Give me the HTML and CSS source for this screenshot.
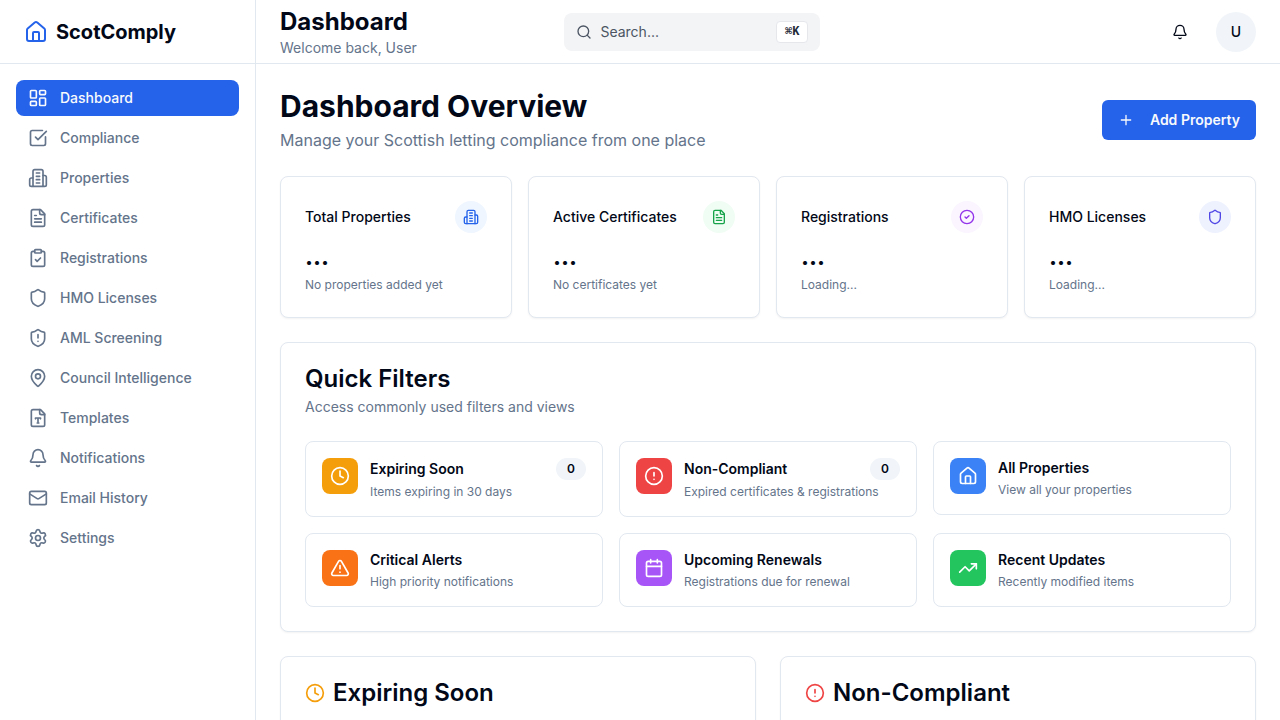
FILE: index.html
```html
<!DOCTYPE html>
<html lang="en">
<head>
<meta charset="utf-8">
<meta name="viewport" content="width=device-width, initial-scale=1">
<title>ScotComply</title>
<link rel="stylesheet" href="styles.css">
</head>
<body>
<svg class="sprite" aria-hidden="true">
  <symbol id="home" viewBox="0 0 24 24"><path d="M15 21v-8a1 1 0 0 0-1-1h-4a1 1 0 0 0-1 1v8"/><path d="M3 10a2 2 0 0 1 .709-1.528l7-5.999a2 2 0 0 1 2.582 0l7 5.999A2 2 0 0 1 21 10v9a2 2 0 0 1-2 2H5a2 2 0 0 1-2-2z"/></symbol>
  <symbol id="dashboard" viewBox="0 0 24 24"><rect width="7" height="9" x="3" y="3" rx="1"/><rect width="7" height="5" x="14" y="3" rx="1"/><rect width="7" height="9" x="14" y="12" rx="1"/><rect width="7" height="5" x="3" y="16" rx="1"/></symbol>
  <symbol id="check-square" viewBox="0 0 24 24"><path d="M21 10.656V19a2 2 0 0 1-2 2H5a2 2 0 0 1-2-2V5a2 2 0 0 1 2-2h12.344"/><path d="m9 11 3 3L22 4"/></symbol>
  <symbol id="building" viewBox="0 0 24 24"><path d="M6 22V4a2 2 0 0 1 2-2h8a2 2 0 0 1 2 2v18Z"/><path d="M6 12H4a2 2 0 0 0-2 2v6a2 2 0 0 0 2 2h2"/><path d="M18 9h2a2 2 0 0 1 2 2v9a2 2 0 0 1-2 2h-2"/><path d="M10 6h4M10 10h4M10 14h4M10 18h4"/></symbol>
  <symbol id="file-text" viewBox="0 0 24 24"><path d="M15 2H6a2 2 0 0 0-2 2v16a2 2 0 0 0 2 2h12a2 2 0 0 0 2-2V7Z"/><path d="M14 2v4a2 2 0 0 0 2 2h4"/><path d="M10 9H8M16 13H8M16 17H8"/></symbol>
  <symbol id="clipboard" viewBox="0 0 24 24"><rect width="8" height="4" x="8" y="2" rx="1"/><path d="M16 4h2a2 2 0 0 1 2 2v14a2 2 0 0 1-2 2H6a2 2 0 0 1-2-2V6a2 2 0 0 1 2-2h2"/><path d="m9 14 2 2 4-4"/></symbol>
  <symbol id="shield" viewBox="0 0 24 24"><path d="M20 13c0 5-3.5 7.5-7.66 8.95a1 1 0 0 1-.67-.01C7.5 20.5 4 18 4 13V6a1 1 0 0 1 1-1c2 0 4.500-1.200 6.240-2.720a1.170 1.170 0 0 1 1.520 0C14.510 3.810 17 5 19 5a1 1 0 0 1 1 1z"/></symbol>
  <symbol id="shield-alert" viewBox="0 0 24 24"><path d="M20 13c0 5-3.5 7.5-7.66 8.950a1 1 0 0 1-.67-.01C7.500 20.500 4 18 4 13V6a1 1 0 0 1 1-1c2 0 4.500-1.200 6.240-2.720a1.170 1.170 0 0 1 1.520 0C14.510 3.810 17 5 19 5a1 1 0 0 1 1 1z"/><path d="M12 8v4M12 16h.01"/></symbol>
  <symbol id="pin" viewBox="0 0 24 24"><path d="M20 10c0 4.993-5.539 10.193-7.399 11.799a1 1 0 0 1-1.202 0C9.539 20.193 4 14.993 4 10a8 8 0 0 1 16 0"/><circle cx="12" cy="10" r="3"/></symbol>
  <symbol id="file-type" viewBox="0 0 24 24"><path d="M15 2H6a2 2 0 0 0-2 2v16a2 2 0 0 0 2 2h12a2 2 0 0 0 2-2V7Z"/><path d="M14 2v4a2 2 0 0 0 2 2h4"/><path d="M9 13v-1h6v1M12 12v6M11 18h2"/></symbol>
  <symbol id="bell" viewBox="0 0 24 24"><path d="M10.268 21a2 2 0 0 0 3.464 0"/><path d="M3.262 15.326A1 1 0 0 0 4 17h16a1 1 0 0 0 .740-1.673C19.410 13.956 18 12.499 18 8A6 6 0 0 0 6 8c0 4.499-1.411 5.956-2.738 7.326"/></symbol>
  <symbol id="mail" viewBox="0 0 24 24"><rect width="20" height="16" x="2" y="4" rx="2"/><path d="m22 7-8.970 5.700a1.940 1.940 0 0 1-2.060 0L2 7"/></symbol>
  <symbol id="settings" viewBox="0 0 24 24"><path d="M9.671 4.136a2.340 2.340 0 0 1 4.659 0 2.340 2.340 0 0 0 3.319 1.915 2.340 2.340 0 0 1 2.330 4.033 2.340 2.340 0 0 0 0 3.831 2.340 2.340 0 0 1-2.330 4.033 2.340 2.340 0 0 0-3.319 1.915 2.340 2.340 0 0 1-4.659 0 2.340 2.340 0 0 0-3.320-1.915 2.340 2.340 0 0 1-2.330-4.033 2.340 2.340 0 0 0 0-3.831A2.340 2.340 0 0 1 6.350 6.051a2.340 2.340 0 0 0 3.319-1.915"/><circle cx="12" cy="12" r="3"/></symbol>
  <symbol id="search" viewBox="0 0 24 24"><path d="m21 21-4.340-4.340"/><circle cx="11" cy="11" r="8"/></symbol>
  <symbol id="plus" viewBox="0 0 24 24"><path d="M5 12h14M12 5v14"/></symbol>
  <symbol id="circle-check" viewBox="0 0 24 24"><circle cx="12" cy="12" r="10"/><path d="m9 12 2 2 4-4"/></symbol>
  <symbol id="clock" viewBox="0 0 24 24"><circle cx="12" cy="12" r="10"/><path d="M12 6v6l4 2"/></symbol>
  <symbol id="circle-alert" viewBox="0 0 24 24"><circle cx="12" cy="12" r="10"/><path d="M12 8v4M12 16h.01"/></symbol>
  <symbol id="triangle" viewBox="0 0 24 24"><path d="m21.730 18-8-14a2 2 0 0 0-3.480 0l-8 14A2 2 0 0 0 4 21h16a2 2 0 0 0 1.730-3"/><path d="M12 9v4M12 17h.01"/></symbol>
  <symbol id="calendar" viewBox="0 0 24 24"><rect width="18" height="18" x="3" y="4" rx="2"/><path d="M8 2v4M16 2v4M3 10h18"/></symbol>
  <symbol id="trending" viewBox="0 0 24 24"><path d="M16 7h6v6"/><path d="m22 7-8.500 8.500-5-5L2 17"/></symbol>
</svg>

<div class="app">
  <aside class="sidebar">
    <a class="brand" href="#"><svg class="icon icon-lg"><use href="#home"/></svg><span>ScotComply</span></a>
    <nav class="nav" aria-label="Main">
      <a class="nav-link active" href="#" aria-current="page"><svg class="icon"><use href="#dashboard"/></svg>Dashboard</a>
      <a class="nav-link" href="#"><svg class="icon"><use href="#check-square"/></svg>Compliance</a>
      <a class="nav-link" href="#"><svg class="icon"><use href="#building"/></svg>Properties</a>
      <a class="nav-link" href="#"><svg class="icon"><use href="#file-text"/></svg>Certificates</a>
      <a class="nav-link" href="#"><svg class="icon"><use href="#clipboard"/></svg>Registrations</a>
      <a class="nav-link" href="#"><svg class="icon"><use href="#shield"/></svg>HMO Licenses</a>
      <a class="nav-link" href="#"><svg class="icon"><use href="#shield-alert"/></svg>AML Screening</a>
      <a class="nav-link" href="#"><svg class="icon"><use href="#pin"/></svg>Council Intelligence</a>
      <a class="nav-link" href="#"><svg class="icon"><use href="#file-type"/></svg>Templates</a>
      <a class="nav-link" href="#"><svg class="icon"><use href="#bell"/></svg>Notifications</a>
      <a class="nav-link" href="#"><svg class="icon"><use href="#mail"/></svg>Email History</a>
      <a class="nav-link" href="#"><svg class="icon"><use href="#settings"/></svg>Settings</a>
    </nav>
  </aside>

  <div class="page">
    <header class="topbar">
      <div>
        <h1 class="topbar-title">Dashboard</h1>
        <p class="topbar-sub">Welcome back, User</p>
      </div>
      <div class="search-area">
        <button class="search" type="button"><svg class="icon icon-sm"><use href="#search"/></svg><span>Search...</span><kbd class="kbd">⌘K</kbd></button>
      </div>
      <div class="actions">
        <button class="icon-button" type="button" aria-label="Notifications"><svg class="icon icon-sm"><use href="#bell"/></svg></button>
        <button class="icon-button avatar" type="button">U</button>
      </div>
    </header>

    <main class="main">
      <div class="page-head">
        <div>
          <h2 class="page-title">Dashboard Overview</h2>
          <p class="page-sub">Manage your Scottish letting compliance from one place</p>
        </div>
        <button class="add-button" type="button"><svg class="icon icon-sm"><use href="#plus"/></svg>Add Property</button>
      </div>

      <section class="stats">
        <article class="card">
          <div class="stat-head"><h3 class="stat-title">Total Properties</h3><span class="stat-icon blue"><svg class="icon icon-sm"><use href="#building"/></svg></span></div>
          <p class="stat-value">...</p><p class="note">No properties added yet</p>
        </article>
        <article class="card">
          <div class="stat-head"><h3 class="stat-title">Active Certificates</h3><span class="stat-icon green"><svg class="icon icon-sm"><use href="#file-text"/></svg></span></div>
          <p class="stat-value">...</p><p class="note">No certificates yet</p>
        </article>
        <article class="card">
          <div class="stat-head"><h3 class="stat-title">Registrations</h3><span class="stat-icon purple"><svg class="icon icon-sm"><use href="#circle-check"/></svg></span></div>
          <p class="stat-value">...</p><p class="note">Loading...</p>
        </article>
        <article class="card">
          <div class="stat-head"><h3 class="stat-title">HMO Licenses</h3><span class="stat-icon indigo"><svg class="icon icon-sm"><use href="#shield"/></svg></span></div>
          <p class="stat-value">...</p><p class="note">Loading...</p>
        </article>
      </section>

      <section class="card">
        <h3 class="card-title">Quick Filters</h3>
        <p class="card-desc">Access commonly used filters and views</p>
        <div class="filters">
          <a class="filter" href="#"><span class="tile amber"><svg class="icon"><use href="#clock"/></svg></span><div class="filter-body"><div class="filter-head"><h4 class="filter-title">Expiring Soon</h4><span class="badge">0</span></div><p class="note">Items expiring in 30 days</p></div></a>
          <a class="filter" href="#"><span class="tile red"><svg class="icon"><use href="#circle-alert"/></svg></span><div class="filter-body"><div class="filter-head"><h4 class="filter-title">Non-Compliant</h4><span class="badge">0</span></div><p class="note">Expired certificates &amp; registrations</p></div></a>
          <a class="filter" href="#"><span class="tile sky"><svg class="icon"><use href="#home"/></svg></span><div class="filter-body"><div class="filter-head"><h4 class="filter-title">All Properties</h4></div><p class="note">View all your properties</p></div></a>
          <a class="filter" href="#"><span class="tile orange"><svg class="icon"><use href="#triangle"/></svg></span><div class="filter-body"><div class="filter-head"><h4 class="filter-title">Critical Alerts</h4></div><p class="note">High priority notifications</p></div></a>
          <a class="filter" href="#"><span class="tile violet"><svg class="icon"><use href="#calendar"/></svg></span><div class="filter-body"><div class="filter-head"><h4 class="filter-title">Upcoming Renewals</h4></div><p class="note">Registrations due for renewal</p></div></a>
          <a class="filter" href="#"><span class="tile emerald"><svg class="icon"><use href="#trending"/></svg></span><div class="filter-body"><div class="filter-head"><h4 class="filter-title">Recent Updates</h4></div><p class="note">Recently modified items</p></div></a>
        </div>
      </section>

      <section class="lists">
        <article class="card"><h3 class="card-title"><svg class="icon amber-text"><use href="#clock"/></svg>Expiring Soon</h3></article>
        <article class="card"><h3 class="card-title"><svg class="icon red-text"><use href="#circle-alert"/></svg>Non-Compliant</h3></article>
      </section>
    </main>
  </div>
</div>
</body>
</html>
```

FILE: styles.css
```css
:root {
  --ink: #020817;
  --muted: #64748b;
  --line: #e2e8f0;
  --soft: #f1f5f9;
  --primary: #2563eb;
}

*, *::before, *::after { box-sizing: border-box; }

body {
  margin: 0;
  background: #fff;
  color: var(--ink);
  font: 400 14px/20px Inter, "Liberation Sans", sans-serif;
}

h1, h2, h3, h4, p { margin: 0; }
a { color: inherit; text-decoration: none; }

button {
  border: 0;
  background: none;
  color: inherit;
  font: inherit;
  cursor: pointer;
}

.sprite { display: none; }

.icon {
  flex: none;
  width: 20px;
  height: 20px;
  fill: none;
  stroke: currentColor;
  stroke-width: 2;
  stroke-linecap: round;
  stroke-linejoin: round;
}
.icon-sm { width: 16px; height: 16px; }
.icon-lg { width: 24px; height: 24px; }

/* Shell */
.app { display: flex; height: 100vh; overflow: hidden; }

.sidebar {
  flex: none;
  width: 256px;
  border-right: 1px solid var(--line);
}

.brand {
  display: flex;
  align-items: center;
  gap: 8px;
  height: 64px;
  padding: 0 24px;
  border-bottom: 1px solid var(--line);
  font-size: 20px;
  line-height: 28px;
  font-weight: 700;
}
.brand .icon { color: var(--primary); }

.nav { display: flex; flex-direction: column; gap: 4px; padding: 16px; }

.nav-link {
  display: flex;
  align-items: center;
  gap: 12px;
  padding: 8px 12px;
  border-radius: 8px;
  color: var(--muted);
  font-weight: 500;
}
.nav-link.active { background: var(--primary); color: #f8fafc; }

.page { display: flex; flex: 1; flex-direction: column; min-width: 0; }

/* Top bar */
.topbar {
  display: flex;
  flex: none;
  align-items: center;
  justify-content: space-between;
  height: 64px;
  padding: 0 24px;
  border-bottom: 1px solid var(--line);
}
.topbar-title { font-size: 24px; line-height: 32px; font-weight: 700; }
.topbar-sub { color: var(--muted); }

.search-area { flex: 1; max-width: 448px; }

.search {
  display: flex;
  align-items: center;
  gap: 8px;
  width: 256px;
  padding: 8px 12px;
  border-radius: 8px;
  background: #f3f4f6;
  color: #4b5563;
}

.kbd {
  margin-left: auto;
  padding: 2px 8px;
  border: 1px solid #e5e7eb;
  border-radius: 4px;
  background: #fff;
  color: #1f2937;
  font: 600 12px/16px "Liberation Mono", monospace;
}

.actions { display: flex; align-items: center; gap: 16px; }

.icon-button {
  display: flex;
  align-items: center;
  justify-content: center;
  width: 40px;
  height: 40px;
  padding: 0;
  border-radius: 50%;
  font-weight: 500;
}
.avatar { background: var(--soft); }

/* Content */
.main {
  display: flex;
  flex: 1;
  flex-direction: column;
  gap: 24px;
  min-height: 0;
  padding: 24px;
  overflow-y: auto;
  scrollbar-width: none;
}
.main > * { flex: none; }

.page-head { display: flex; align-items: center; justify-content: space-between; }
.page-title { font-size: 30px; line-height: 36px; font-weight: 700; }
.page-sub { margin-top: 4px; color: var(--muted); font-size: 16px; line-height: 24px; }

.add-button {
  display: flex;
  align-items: center;
  gap: 16px;
  padding: 10px 16px;
  border-radius: 6px;
  background: var(--primary);
  color: #f8fafc;
  font-weight: 600;
}

.card {
  padding: 24px;
  border: 1px solid var(--line);
  border-radius: 8px;
  background: #fff;
  box-shadow: 0 1px 2px rgba(0, 0, 0, 0.05);
}

.stats { display: grid; grid-template-columns: repeat(4, 1fr); gap: 16px; }
.stat-head { display: flex; align-items: center; justify-content: space-between; padding-bottom: 8px; }
.stat-title { font-size: 14px; line-height: 20px; font-weight: 500; }

.stat-icon {
  display: flex;
  padding: 8px;
  border-radius: 50%;
}
.blue { background: #eff6ff; color: #2563eb; }
.green { background: #f0fdf4; color: #16a34a; }
.purple { background: #faf5ff; color: #9333ea; }
.indigo { background: #eef2ff; color: #4f46e5; }

.stat-value { font-size: 24px; line-height: 32px; font-weight: 700; }
.note { margin-top: 4px; color: var(--muted); font-size: 12px; line-height: 16px; }

.card-title {
  display: flex;
  align-items: center;
  gap: 8px;
  font-size: 24px;
  line-height: 24px;
  font-weight: 600;
}
.card-desc { margin-top: 6px; color: var(--muted); }

.filters {
  display: grid;
  grid-template-columns: repeat(3, 1fr);
  align-items: start;
  gap: 16px;
  margin-top: 24px;
}

.filter {
  display: flex;
  align-items: flex-start;
  gap: 12px;
  padding: 16px;
  border: 1px solid var(--line);
  border-radius: 8px;
}
.filter-body { flex: 1; min-width: 0; }
.filter-head { display: flex; align-items: center; justify-content: space-between; }
.filter-title { font-size: 14px; line-height: 20px; font-weight: 600; }

.tile { display: flex; padding: 8px; border-radius: 8px; color: #fff; }
.amber { background: #f59e0b; }
.red { background: #ef4444; }
.sky { background: #3b82f6; }
.orange { background: #f97316; }
.violet { background: #a855f7; }
.emerald { background: #22c55e; }

.badge {
  padding: 3px 11px;
  border-radius: 11px;
  background: var(--soft);
  font-size: 12px;
  line-height: 16px;
  font-weight: 600;
}

.lists { display: grid; grid-template-columns: repeat(2, 1fr); gap: 24px; }
.amber-text { color: #f59e0b; }
.red-text { color: #ef4444; }
```
